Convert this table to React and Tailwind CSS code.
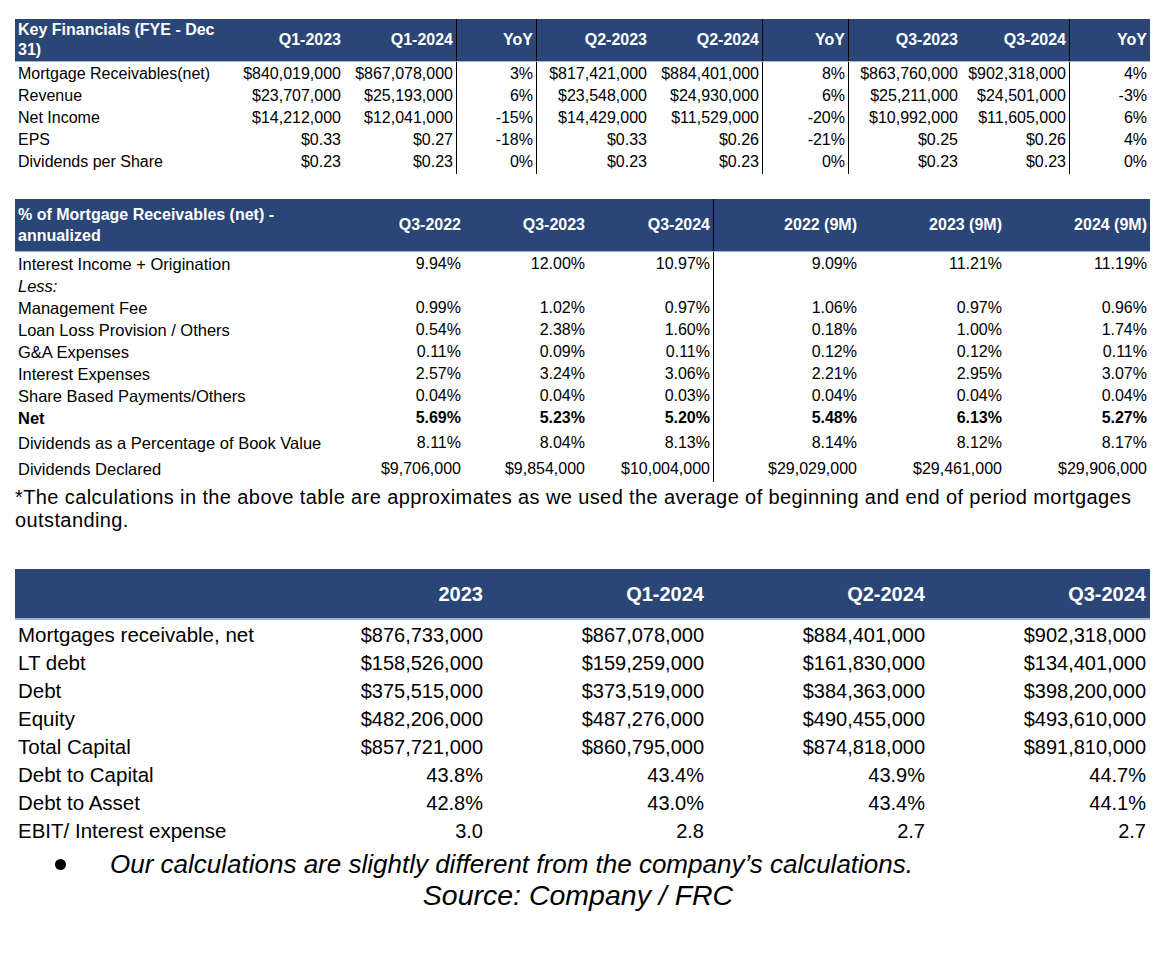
import React from "react";

const FONT = { fontFamily: '"Liberation Sans", Arial, Helvetica, sans-serif' };
const HDR = "bg-[#2a4676]";

const t1Cols = "grid grid-cols-[225px_104px_113px_80px_113px_113px_86px_112px_109px_80px]";
const t1Border = [false, false, true, true, false, true, true, false, true, false];
const t1Head = ["Q1-2023", "Q1-2024", "YoY", "Q2-2023", "Q2-2024", "YoY", "Q3-2023", "Q3-2024", "YoY"];
const t1Rows = [
  ["Mortgage Receivables(net)", "$840,019,000", "$867,078,000", "3%", "$817,421,000", "$884,401,000", "8%", "$863,760,000", "$902,318,000", "4%"],
  ["Revenue", "$23,707,000", "$25,193,000", "6%", "$23,548,000", "$24,930,000", "6%", "$25,211,000", "$24,501,000", "-3%"],
  ["Net Income", "$14,212,000", "$12,041,000", "-15%", "$14,429,000", "$11,529,000", "-20%", "$10,992,000", "$11,605,000", "6%"],
  ["EPS", "$0.33", "$0.27", "-18%", "$0.33", "$0.26", "-21%", "$0.25", "$0.26", "4%"],
  ["Dividends per Share", "$0.23", "$0.23", "0%", "$0.23", "$0.23", "0%", "$0.23", "$0.23", "0%"],
];

const t2Cols = "grid grid-cols-[325px_124px_124px_126px_146px_145px_145px]";
const t2Head = ["Q3-2022", "Q3-2023", "Q3-2024", "2022 (9M)", "2023 (9M)", "2024 (9M)"];
const t2Rows = [
  { l: "Interest Income + Origination", v: ["9.94%", "12.00%", "10.97%", "9.09%", "11.21%", "11.19%"], h: "h-[22px]" },
  { l: "Less:", v: ["", "", "", "", "", ""], h: "h-[22px]", italic: true },
  { l: "Management Fee", v: ["0.99%", "1.02%", "0.97%", "1.06%", "0.97%", "0.96%"], h: "h-[22px]" },
  { l: "Loan Loss Provision / Others", v: ["0.54%", "2.38%", "1.60%", "0.18%", "1.00%", "1.74%"], h: "h-[22px]" },
  { l: "G&A Expenses", v: ["0.11%", "0.09%", "0.11%", "0.12%", "0.12%", "0.11%"], h: "h-[22px]" },
  { l: "Interest Expenses", v: ["2.57%", "3.24%", "3.06%", "2.21%", "2.95%", "3.07%"], h: "h-[22px]" },
  { l: "Share Based Payments/Others", v: ["0.04%", "0.04%", "0.03%", "0.04%", "0.04%", "0.04%"], h: "h-[22px]" },
  { l: "Net", v: ["5.69%", "5.23%", "5.20%", "5.48%", "6.13%", "5.27%"], h: "h-[24px]", bold: true },
  { l: "Dividends as a Percentage of Book Value", v: ["8.11%", "8.04%", "8.13%", "8.14%", "8.12%", "8.17%"], h: "h-[26px]" },
  { l: "Dividends Declared", v: ["$9,706,000", "$9,854,000", "$10,004,000", "$29,029,000", "$29,461,000", "$29,906,000"], h: "h-[26px]" },
];

const t3Cols = "grid grid-cols-[251px_221px_221px_221px_221px]";
const t3Head = ["2023", "Q1-2024", "Q2-2024", "Q3-2024"];
const t3Rows = [
  ["Mortgages receivable, net", "$876,733,000", "$867,078,000", "$884,401,000", "$902,318,000"],
  ["LT debt", "$158,526,000", "$159,259,000", "$161,830,000", "$134,401,000"],
  ["Debt", "$375,515,000", "$373,519,000", "$384,363,000", "$398,200,000"],
  ["Equity", "$482,206,000", "$487,276,000", "$490,455,000", "$493,610,000"],
  ["Total Capital", "$857,721,000", "$860,795,000", "$874,818,000", "$891,810,000"],
  ["Debt to Capital", "43.8%", "43.4%", "43.9%", "44.7%"],
  ["Debt to Asset", "42.8%", "43.0%", "43.4%", "44.1%"],
  ["EBIT/ Interest expense", "3.0", "2.8", "2.7", "2.7"],
];

function Table1() {
  return (
    <div className="w-[1135px]">
      <div className={`${t1Cols} ${HDR} h-[43px] border-b border-[#9fb2cf] text-white font-bold text-[16px]`}>
        <div className="pl-[3px] pt-[1px] leading-[20px]">
          Key Financials (FYE - Dec
          <br />
          31)
        </div>
        {t1Head.map((h, i) => (
          <div
            key={i}
            className={`flex items-center justify-end pr-[3px] ${t1Border[i + 1] ? "border-r border-black" : ""}`}
          >
            {h}
          </div>
        ))}
      </div>
      {t1Rows.map((r, ri) => (
        <div key={ri} className={`${t1Cols} h-[22px] text-black`}>
          {r.map((c, ci) =>
            ci === 0 ? (
              <div key={ci} className="flex items-center pl-[3px] text-[16px] whitespace-nowrap">
                {c}
              </div>
            ) : (
              <div
                key={ci}
                className={`flex items-center justify-end pr-[3px] text-[16px] whitespace-nowrap ${t1Border[ci] ? "border-r border-black" : ""}`}
              >
                {c}
              </div>
            )
          )}
        </div>
      ))}
    </div>
  );
}

function Table2() {
  return (
    <div className="w-[1135px] mt-[27px]">
      <div className={`${t2Cols} ${HDR} h-[53px] border-b border-[#9fb2cf] text-white font-bold text-[16px]`}>
        <div className="flex items-center pl-[3px] leading-[21px]">
          <div>
            % of Mortgage Receivables (net) -
            <br />
            annualized
          </div>
        </div>
        {t2Head.map((h, i) => (
          <div
            key={i}
            className={`flex items-center justify-end pr-[3px] ${i === 2 ? "border-r border-black" : ""}`}
          >
            {h}
          </div>
        ))}
      </div>
      {t2Rows.map((r, ri) => (
        <div key={ri} className={`${t2Cols} ${r.h} text-black text-[16px] ${r.bold ? "font-bold" : ""}`}>
          <div className={`flex items-center pl-[3px] whitespace-nowrap text-[16.5px] ${r.italic ? "italic" : ""}`}>
            {r.l}
          </div>
          {r.v.map((c, ci) => (
            <div
              key={ci}
              className={`flex items-center justify-end pr-[3px] whitespace-nowrap ${ci === 2 ? "border-r border-black" : ""}`}
            >
              {c}
            </div>
          ))}
        </div>
      ))}
    </div>
  );
}

function Table3() {
  return (
    <div className="w-[1135px] mt-[37px]">
      <div className={`${t3Cols} ${HDR} h-[51px] border-b-2 border-[#9fb2cf] text-white font-bold text-[20px]`}>
        <div />
        {t3Head.map((h, i) => (
          <div key={i} className="flex items-center justify-end pr-[4px]">
            {h}
          </div>
        ))}
      </div>
      {t3Rows.map((r, ri) => (
        <div key={ri} className={`${t3Cols} h-[28px] text-black`}>
          {r.map((c, ci) =>
            ci === 0 ? (
              <div key={ci} className="flex items-center pl-[3px] text-[20.5px] whitespace-nowrap">
                {c}
              </div>
            ) : (
              <div key={ci} className="flex items-center justify-end pr-[4px] text-[20px] whitespace-nowrap">
                {c}
              </div>
            )
          )}
        </div>
      ))}
    </div>
  );
}

export default function App() {
  return (
    <div className="min-h-[978px] w-[1168px] bg-white pt-[19px] pl-[15px]" style={FONT}>
      <Table1 />
      <Table2 />
      <div className="mt-[4px] w-[1135px] text-[20px] leading-[23px] tracking-[0.4px] text-black whitespace-nowrap">
        *The calculations in the above table are approximates as we used the average of beginning and end of period
        mortgages
        <br />
        outstanding.
      </div>
      <Table3 />
      <div className="w-[1135px] mt-[5px] text-black italic">
        <div className="flex items-center h-[31px] pl-[40px]">
          <div className="w-[11px] h-[11px] rounded-full bg-black shrink-0" />
          <div className="ml-[44px] text-[26px] whitespace-nowrap">
            Our calculations are slightly different from the company’s calculations.
          </div>
        </div>
        <div className="h-[31px] flex items-center justify-center pr-[9px] text-[28.5px]">Source: Company / FRC</div>
      </div>
    </div>
  );
}
